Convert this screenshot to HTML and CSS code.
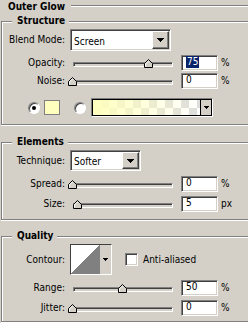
FILE: index.html
```html
<!DOCTYPE html>
<html lang="en">
  <head>
    <meta charset="UTF-8" />
    <meta name="viewport" content="width=device-width, initial-scale=1.0" />
    <title>Outer Glow</title>
    <link rel="stylesheet" href="styles.css">
  </head>
  <body>
    <div class="panel-head">
      <span class="panel-title">Outer Glow</span>
      <span class="groove"></span>
    </div>

    <fieldset class="group group-structure">
      <legend>Structure</legend>
      <div class="row row-select">
        <label class="label">Blend Mode:</label>
        <div class="select select-blend">
          <span class="select-value">Screen</span>
          <span class="select-btn"><svg width="7" height="4"><path d="M0 0h7v1h-1v1h-1v1h-1v1h-1v-1h-1v-1h-1v-1h-1z" fill="#000"/></svg></span>
        </div>
      </div>
      <div class="row row-first">
        <label class="label">Opacity:</label>
        <div class="slider">
          <div class="track"></div>
          <span class="thumb" style="left: 76px"><svg width="9" height="9"><path d="M0.5 8.5V4.5L4.5 0.5L8.5 4.5V8.5Z" fill="#d4d0c8" stroke="#000"/><path d="M1.5 7.5V4.9L4.5 1.9" fill="none" stroke="#fff"/></svg></span>
        </div>
        <div class="field"><span class="selected">75</span></div>
        <span class="unit">%</span>
      </div>
      <div class="row row-next">
        <label class="label">Noise:</label>
        <div class="slider">
          <div class="track"></div>
          <span class="thumb" style="left: 0px"><svg width="9" height="9"><path d="M0.5 8.5V4.5L4.5 0.5L8.5 4.5V8.5Z" fill="#d4d0c8" stroke="#000"/><path d="M1.5 7.5V4.9L4.5 1.9" fill="none" stroke="#fff"/></svg></span>
        </div>
        <div class="field">0</div>
        <span class="unit">%</span>
      </div>
      <div class="row row-color">
        <span class="radio checked"></span>
        <span class="swatch"></span>
        <span class="radio radio-gradient"></span>
        <div class="gradient">
          <span class="gradient-fill"></span>
          <span class="gradient-btn"><svg width="5" height="3"><path d="M0 0h5v1h-1v1h-1v1h-1v-1h-1v-1h-1z" fill="#000"/></svg></span>
        </div>
      </div>
    </fieldset>

    <fieldset class="group group-elements">
      <legend>Elements</legend>
      <div class="row row-select">
        <label class="label">Technique:</label>
        <div class="select select-technique">
          <span class="select-value">Softer</span>
          <span class="select-btn"><svg width="7" height="4"><path d="M0 0h7v1h-1v1h-1v1h-1v1h-1v-1h-1v-1h-1v-1h-1z" fill="#000"/></svg></span>
        </div>
      </div>
      <div class="row row-gap">
        <label class="label">Spread:</label>
        <div class="slider">
          <div class="track"></div>
          <span class="thumb" style="left: 0px"><svg width="9" height="9"><path d="M0.5 8.5V4.5L4.5 0.5L8.5 4.5V8.5Z" fill="#d4d0c8" stroke="#000"/><path d="M1.5 7.5V4.9L4.5 1.9" fill="none" stroke="#fff"/></svg></span>
        </div>
        <div class="field">0</div>
        <span class="unit">%</span>
      </div>
      <div class="row row-close">
        <label class="label">Size:</label>
        <div class="slider">
          <div class="track"></div>
          <span class="thumb" style="left: 5px"><svg width="9" height="9"><path d="M0.5 8.5V4.5L4.5 0.5L8.5 4.5V8.5Z" fill="#d4d0c8" stroke="#000"/><path d="M1.5 7.5V4.9L4.5 1.9" fill="none" stroke="#fff"/></svg></span>
        </div>
        <div class="field">5</div>
        <span class="unit">px</span>
      </div>
    </fieldset>

    <fieldset class="group group-quality">
      <legend>Quality</legend>
      <div class="row row-contour">
        <label class="label">Contour:</label>
        <div class="contour">
          <span class="contour-preview"></span>
          <span class="contour-btn"><svg width="5" height="3"><path d="M0 0h5v1h-1v1h-1v1h-1v-1h-1v-1h-1z" fill="#000"/></svg></span>
        </div>
        <span class="checkbox"></span>
        <span class="check-label">Anti-aliased</span>
      </div>
      <div class="row row-gap">
        <label class="label">Range:</label>
        <div class="slider">
          <div class="track"></div>
          <span class="thumb" style="left: 50px"><svg width="9" height="9"><path d="M0.5 8.5V4.5L4.5 0.5L8.5 4.5V8.5Z" fill="#d4d0c8" stroke="#000"/><path d="M1.5 7.5V4.9L4.5 1.9" fill="none" stroke="#fff"/></svg></span>
        </div>
        <div class="field">50</div>
        <span class="unit">%</span>
      </div>
      <div class="row row-close">
        <label class="label">Jitter:</label>
        <div class="slider">
          <div class="track"></div>
          <span class="thumb" style="left: 0px"><svg width="9" height="9"><path d="M0.5 8.5V4.5L4.5 0.5L8.5 4.5V8.5Z" fill="#d4d0c8" stroke="#000"/><path d="M1.5 7.5V4.9L4.5 1.9" fill="none" stroke="#fff"/></svg></span>
        </div>
        <div class="field">0</div>
        <span class="unit">%</span>
      </div>
    </fieldset>
  </body>
</html>
```

FILE: styles.css
```css
* {
  margin: 0;
  padding: 0;
  box-sizing: border-box;
}
body {
  width: 248px;
  height: 323px;
  overflow: hidden;
  background-color: #d4d0c8;
  color: #000;
  font-family: "DejaVu Sans Condensed", "DejaVu Sans", sans-serif;
  font-size: 10px;
  line-height: 12px;
}
svg {
  display: block;
}

/* panel heading */
.panel-head {
  display: flex;
  height: 14px;
  padding: 1px 0 0 8px;
}
.panel-title {
  font-weight: bold;
}
.groove {
  flex: 1;
  height: 2px;
  margin: 4px 0 0 6px;
  border-top: 1px solid #808080;
  border-bottom: 1px solid #fff;
}

/* group boxes, cut off by the right edge */
.group {
  width: 247px;
  min-width: 0;
  margin: 1px 0 0 1px;
  padding: 0 0 7px 0;
  border: 1px solid #808080;
  border-right: 0;
  box-shadow: inset 1px 1px #fff, 0 1px #fff;
}
.group legend {
  margin-left: 10px;
  padding: 0 4px 0 5px;
  font-weight: bold;
  line-height: 12px;
  background-color: #d4d0c8;
}
.group-elements {
  margin-top: 11px;
}
.group-quality {
  margin-top: 10px;
  padding-bottom: 5px;
}

/* rows */
.row {
  display: flex;
  align-items: center;
  height: 16px;
}
.row-select {
  height: auto;
  margin-top: 2px;
}
.row-first {
  margin-top: 4px;
}
.row-next {
  margin-top: 2px;
}
.row-gap {
  margin-top: 5px;
}
.row-close {
  margin-top: 4px;
}
.row-color {
  height: 19px;
  margin-top: 9px;
}
.row-contour {
  height: 31px;
  margin-top: 2px;
}
.label {
  flex: none;
  width: 63px;
  text-align: right;
}

/* drop-down */
.select {
  display: flex;
  height: 22px;
  margin-left: 5px;
  padding: 1px;
  background-color: #fff;
  border: 1px solid;
  border-color: #808080 #fff #fff #808080;
  box-shadow: inset 1px 1px #404040, inset -1px -1px #d4d0c8;
}
.select-blend {
  width: 101px;
}
.select-technique {
  width: 71px;
  height: 21px;
}
.select-value {
  flex: 1;
  padding: 5px 0 0 2px;
}
.select-technique .select-value {
  padding-top: 4px;
}
.select-btn {
  display: flex;
  align-items: center;
  justify-content: center;
  width: 17px;
  background-color: #d4d0c8;
  border: 1px solid;
  border-color: #fff #404040 #404040 #fff;
  box-shadow: inset -1px -1px #808080;
}

/* slider */
.slider {
  position: relative;
  flex: none;
  align-self: flex-start;
  width: 110px;
  height: 9px;
  margin: 4px 0 0 3px;
}
.track {
  width: 100px;
  height: 5px;
  margin: 3px 0 0 5px;
  background-color: #d4d0c8;
  border: 1px solid;
  border-color: #808080 #fff #fff #808080;
  box-shadow: inset 1px 1px #404040;
}
.thumb {
  position: absolute;
  top: 0;
  width: 9px;
  height: 9px;
}

/* number field */
.field {
  flex: none;
  width: 37px;
  height: 16px;
  margin-left: 3px;
  padding-left: 4px;
  background-color: #fff;
  border: 1px solid;
  border-color: #808080 #fff #fff #808080;
  box-shadow: inset 1px 1px #404040, inset -1px -1px #d4d0c8;
}
.selected {
  display: inline-block;
  padding: 0 1px;
  background-color: #0a246a;
  color: #fff;
}
.unit {
  margin-left: 3px;
}

/* colour row */
.radio {
  display: flex;
  align-items: center;
  justify-content: center;
  flex: none;
  width: 12px;
  height: 12px;
  margin-left: 26px;
  border-radius: 50%;
  background-color: #fff;
  border: 1px solid;
  border-color: #808080 #fff #fff #808080;
  box-shadow: inset 1px 1px #404040;
}
.radio.checked::after {
  content: "";
  width: 4px;
  height: 4px;
  border-radius: 50%;
  background-color: #000;
}
.radio-gradient {
  margin-left: 14px;
}
.swatch {
  width: 16px;
  height: 15px;
  margin-left: 4px;
  background-color: #ffffbe;
  border: 1px solid #808080;
}
.gradient {
  display: flex;
  width: 122px;
  height: 19px;
  margin-left: 5px;
  border: 1px solid;
  border-color: #808080 #fff #fff #808080;
}
.gradient-fill {
  flex: 1;
  border: 1px solid #000;
  border-right: 0;
  background: linear-gradient(to right, #ffffbe, rgba(255, 255, 190, 0)),
    repeating-conic-gradient(#ddd 0 25%, #fff 0 50%) 0 0 / 16px 16px;
}
.gradient-btn {
  display: flex;
  align-items: center;
  justify-content: center;
  width: 12px;
  background-color: #d4d0c8;
  border: 1px solid #000;
}

/* contour */
.contour {
  display: flex;
  width: 42px;
  height: 31px;
  margin-left: 5px;
  border: 1px solid;
  border-color: #404040 #fff #fff #404040;
}
.contour-preview {
  width: 29px;
  background: linear-gradient(to bottom right, #fff 50%, #808080 50%);
  border-right: 1px solid #808080;
}
.contour-btn {
  display: flex;
  align-items: center;
  justify-content: center;
  flex: 1;
  background-color: #d4d0c8;
}
.checkbox {
  width: 13px;
  height: 13px;
  margin-left: 13px;
  background-color: #fff;
  border: 1px solid;
  border-color: #808080 #fff #fff #808080;
  box-shadow: inset 1px 1px #404040, inset -1px -1px #d4d0c8;
}
.check-label {
  margin-left: 5px;
}
```
